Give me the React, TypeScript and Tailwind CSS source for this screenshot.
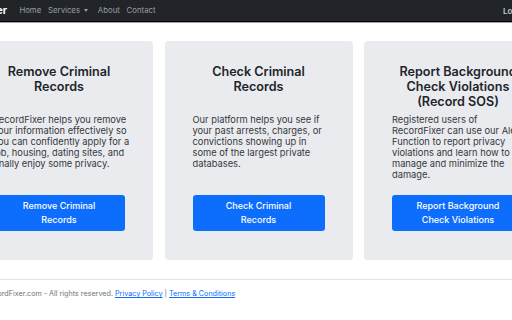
const CARDS = [
  {
    id: 1,
    title: ['Remove Criminal', 'Records'],
    body: ['RecordFixer helps you remove', 'your information effectively so', 'you can confidently apply for a', 'job, housing, dating sites, and', 'finally enjoy some privacy.'],
    cta: ['Remove Criminal', 'Records'],
  },
  {
    id: 2,
    title: ['Check Criminal', 'Records'],
    body: ['Our platform helps you see if', 'your past arrests, charges, or', 'convictions showing up in', 'some of the largest private', 'databases.'],
    cta: ['Check Criminal', 'Records'],
  },
  {
    id: 3,
    title: ['Report Background', 'Check Violations', '(Record SOS)'],
    body: ['Registered users of', 'RecordFixer can use our Alert', 'Function to report privacy', 'violations and learn how to', 'manage and minimize the', 'damage.'],
    cta: ['Report Background', 'Check Violations'],
  },
];

const NAV = ['Home', 'Services', 'About', 'Contact'];

function Lines({ lines }: { lines: string[] }) {
  return (
    <>
      {lines.map((line, i) => (
        <span key={i} className="block whitespace-nowrap">
          {line}
        </span>
      ))}
    </>
  );
}

export default function App() {
  return (
    <div className="w-[512px] h-[320px] overflow-hidden bg-white font-['Inter',sans-serif]">
      <nav className="h-[22px] bg-[#212529] border-b border-black flex items-center text-[7.8px]">
        <div className="w-[60px] -ml-[53px] flex justify-end">
          <span className="text-[10.5px] font-bold text-white whitespace-nowrap">RecordFixer</span>
        </div>
        <ul className="flex items-center ml-[9px]">
          {NAV.map((item) => (
            <li key={item} className="px-[3.4px] text-[#9a9da1] flex items-center gap-[4px]">
              {item}
              {item === 'Services' && (
                <span className="w-0 h-0 border-x-[2.5px] border-x-transparent border-t-[3px] border-t-[#9a9da1] mr-[3px]" />
              )}
            </li>
          ))}
        </ul>
        <div className="ml-auto w-[9px] overflow-visible whitespace-nowrap text-[8px] font-semibold text-[#c8cacc]">
          Login
        </div>
      </nav>
      <div className="h-px bg-[#a0a0a0]" />

      <main className="pt-[18px]">
        <div className="flex gap-[11.5px] -ml-[35px]">
          {CARDS.map((card) => (
            <div
              key={card.id}
              className="shrink-0 w-[188px] h-[219px] rounded-[4px] bg-[#eaebef] px-[28px] pt-[23px] pb-[29px] flex flex-col"
            >
              <h3 className="h-[46px] text-center text-[12.6px] leading-[15px] font-semibold text-[#212529]">
                <Lines lines={card.title} />
              </h3>
              <p className="mt-[4px] text-[9.3px] leading-[11px] text-[#35383c]">
                <Lines lines={card.body} />
              </p>
              <button className="mt-auto h-[36px] w-full rounded-[3px] bg-[#0d6efd] text-white text-[9px] leading-[14px] font-medium">
                <Lines lines={card.cta} />
              </button>
            </div>
          ))}
        </div>
      </main>

      <footer className="mt-[19px] border-t border-[#e2e4e7] pt-[9px] flex items-center text-[7.2px] text-[#6c757d]">
        <div className="w-[113px] flex justify-end">
          <span className="whitespace-nowrap">© 2024 RecordFixer.com - All rights reserved.</span>
        </div>
        <a href="#" className="ml-[2px] text-[#0d6efd] underline">Privacy Policy</a>
        <span className="mx-[2px]">|</span>
        <a href="#" className="text-[#0d6efd] underline">Terms &amp; Conditions</a>
      </footer>
    </div>
  );
}
